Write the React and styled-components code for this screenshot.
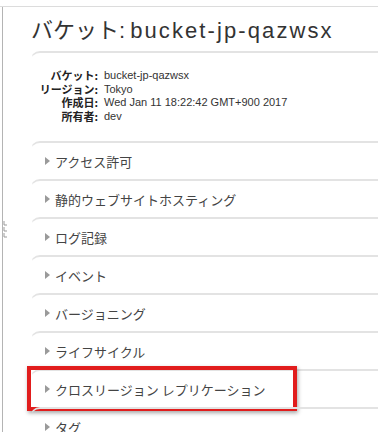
import React from "react";
import styled, { createGlobalStyle } from "styled-components";

const GlobalStyle = createGlobalStyle`
  html, body {
    margin: 0;
    padding: 0;
    background: #ffffff;
  }
  body {
    font-family: "Liberation Sans", "Noto Sans CJK JP", sans-serif;
    color: #333333;
  }
`;

const Page = styled.div`
  margin-top: 6px;
  border-top: 1px solid #dcdcdc;
  height: 425px;
  overflow: hidden;
`;

const Frame = styled.div`
  position: relative;
  margin-left: 2px;
  border-left: 1px solid #b4b4b4;
  height: 100%;
  padding-left: 27px;
`;

const Grip = styled.svg`
  position: absolute;
  left: 0;
  top: 212px;
`;

const Title = styled.h1`
  margin: 0;
  padding: 9px 0 5px 1px;
  font-family: "Liberation Sans", "Noto Sans CJK JP", sans-serif;
  font-weight: normal;
  font-size: 22px;
  line-height: 30px;
  color: #333333;
  white-space: nowrap;

  span {
    margin-left: 5px;
    letter-spacing: 2.1px;
  }
`;

const Info = styled.div`
  border-top: 2px solid #e3e3e3;
  border-left: 1px solid transparent;
  border-top-left-radius: 10px;
  padding: 16px 0 18px;
  display: grid;
  grid-template-columns: 67px 1fr;
  grid-auto-rows: 13.5px;
  column-gap: 6px;
  font-size: 11px;
  line-height: 13.5px;
`;

const Label = styled.div`
  text-align: right;
  font-weight: bold;
  color: #222222;
  font-family: "Noto Sans CJK JP", sans-serif;
  font-size: 11px;
  line-height: 13.5px;
`;

const Value = styled.div`
  color: #333333;
  font-family: "Liberation Sans", sans-serif;
  line-height: 13.5px;
`;

const Row = styled.div`
  position: relative;
  height: 36px;
  border-top: 2px solid #e3e3e3;
  border-left: 1px solid transparent;
  border-top-left-radius: 10px;
  display: flex;
  align-items: center;
  padding-left: 14px;
  gap: 5px;
  font-family: "Noto Sans CJK JP", sans-serif;
  font-size: 13px;
  color: #444444;
  white-space: nowrap;

  ${(p) =>
    p.$highlight &&
    `
    &::after {
      content: "";
      position: absolute;
      left: -4px;
      top: -5px;
      width: 262px;
      height: 37px;
      border: 4px solid #e11d1d;
      box-shadow: 1px 2px 4px rgba(0, 0, 0, 0.35);
    }
  `}
`;

const Arrow = styled.span`
  width: 0;
  height: 0;
  border-top: 4px solid transparent;
  border-bottom: 4px solid transparent;
  border-left: 5px solid #9a9a9a;
  flex-shrink: 0;
`;

const details = [
  ["バケット:", "bucket-jp-qazwsx"],
  ["リージョン:", "Tokyo"],
  ["作成日:", "Wed Jan 11 18:22:42 GMT+900 2017"],
  ["所有者:", "dev"],
];

const sections = [
  "アクセス許可",
  "静的ウェブサイトホスティング",
  "ログ記録",
  "イベント",
  "バージョニング",
  "ライフサイクル",
  "クロスリージョン レプリケーション",
  "タグ",
];

export default function App() {
  return (
    <>
      <GlobalStyle />
      <Page>
        <Frame>
          <Grip width="6" height="22" viewBox="0 0 6 22">
            <rect x="0" y="0" width="6" height="22" fill="#ffffff" />
            <path d="M1 2v4h3M1 8v4h3M1 14v4h3" stroke="#9a9a9a" strokeWidth="1" fill="none" />
          </Grip>
          <Title>
            バケット:<span>bucket-jp-qazwsx</span>
          </Title>
          <Info>
            {details.map(([k, v]) => (
              <React.Fragment key={k}>
                <Label>{k}</Label>
                <Value>{v}</Value>
              </React.Fragment>
            ))}
          </Info>
          {sections.map((s) => (
            <Row key={s} $highlight={s.startsWith("クロス")}>
              <Arrow />
              {s}
            </Row>
          ))}
        </Frame>
      </Page>
    </>
  );
}
